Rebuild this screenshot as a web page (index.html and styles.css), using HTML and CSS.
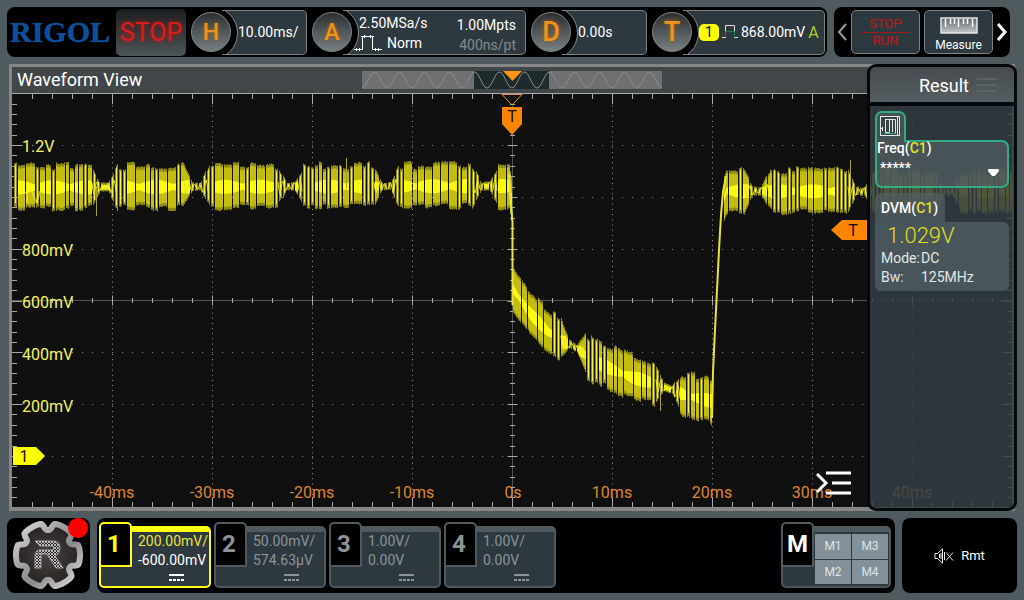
FILE: index.html
```html
<!DOCTYPE html>
<html lang="en">
<head>
<meta charset="utf-8">
<title>Oscilloscope</title>
<link rel="stylesheet" href="styles.css">
</head>
<body>
<header class="topbar">
  <div class="bar status">
    <span class="brand">RIGOL</span>
    <button class="run-state">STOP</button>
    <section class="module">
      <button class="knob">H</button>
      <div class="readout narrow">10.00ms/</div>
    </section>
    <section class="module grow">
      <button class="knob">A</button>
      <div class="readout acquire">
        <div class="lines">
          <span>2.50MSa/s</span>
          <span class="mode"><svg width="28" height="17" viewBox="0 0 28 17"><path d="M0 15.500H8.500V2.500M7 2.500H20M18.500 2.500V15.500H28M2.500 14V17M5.500 14V17M10.500 1V4M16.500 1V4M21.500 14V17M24.500 14V17" fill="none" stroke="#fff" stroke-width="1"/></svg>Norm</span>
        </div>
        <div class="lines right"><span>1.00Mpts</span><span class="dim">400ns/pt</span></div>
      </div>
    </section>
    <section class="module">
      <button class="knob big">D</button>
      <div class="readout narrow">0.00s</div>
    </section>
    <section class="module">
      <button class="knob big">T</button>
      <div class="readout trigger">
        <span class="source">1</span>
        <svg width="16" height="14" viewBox="0 0 16 14"><path d="M0 12.500H3.500V.5H12.500V12.500H16" fill="none" stroke="#ddd"/><path d="M3.500 12V6.500H12.500V12" fill="none" stroke="#1f7a50"/></svg>
        <span>868.00mV</span><span class="sweep">A</span>
      </div>
    </section>
  </div>
  <nav class="bar shortcuts">
    <button class="arrow" aria-label="Previous"><svg width="10" height="18" viewBox="0 0 10 18"><path d="M9 1L2 9L9 17" fill="none" stroke="#9a9a9a" stroke-width="2"/></svg></button>
    <button class="shortcut stoprun"><span>STOP</span><span class="run">RUN</span></button>
    <button class="shortcut measure">
      <svg width="38" height="18" viewBox="0 0 38 18"><defs><linearGradient id="rule" x2="0" y2="1"><stop offset="0" stop-color="#5f6568"/><stop offset="1" stop-color="#c3c6c8"/></linearGradient></defs><rect x="1" y="1" width="36" height="15" fill="url(#rule)" stroke="#e4e4e4" stroke-width="1.500"/><path d="M5.500 2V10M10.500 2V7M14.500 2V7M18.500 2V10M23.500 2V7M27.500 2V7M32.500 2V10" stroke="#fff" stroke-width="1.500"/></svg>
      <span>Measure</span>
    </button>
    <button class="arrow" aria-label="Next"><svg width="10" height="18" viewBox="0 0 10 18"><path d="M1 1L8 9L1 17" fill="none" stroke="#fff" stroke-width="3"/></svg></button>
  </nav>
</header>

<main class="scope">
  <div class="view-head">
    <h1>Waveform View</h1>
    <svg class="overview" width="300" height="18" viewBox="0 0 300 18">
      <rect width="300" height="18" fill="#6f7071"/>
      <rect x="112" width="75" height="18" fill="#1e2a2c"/>
      <path id="overview-wave" fill="none" stroke="#8b8c8c"/>
      <path d="M141 0H160L150.500 10Z" fill="#ff9418"/>
    </svg>
  </div>
  <svg class="plot" viewBox="12 93 1000 414">
    <rect x="12" y="93" width="1000" height="414" fill="#101010"/>
    <g id="grid"></g>
    <g id="wave"></g>
    <g class="volt">
      <text class="hidden-volt" x="22" y="203">1V</text>
      <text x="22" y="152">1.2V</text><text x="22" y="256">800mV</text><text x="22" y="308">600mV</text><text x="22" y="360">400mV</text><text x="22" y="412">200mV</text>
    </g>
    <g class="time">
      <text x="112" y="498">-40ms</text><text x="212" y="498">-30ms</text><text x="312" y="498">-20ms</text><text x="412" y="498">-10ms</text><text x="513" y="498">0s</text><text x="612" y="498">10ms</text><text x="712" y="498">20ms</text><text x="812" y="498">30ms</text><text x="912" y="498">40ms</text>
    </g>
    <path d="M502 94.500H522L512 105Z" fill="#101010" stroke="#e8923c"/>
    <path d="M502 107H522V124L512 135L502 124Z" fill="#ff8400"/>
    <text class="flag" x="512" y="122">T</text>
    <path d="M867 220V240H842L831 230L842 220Z" fill="#ff8400"/>
    <text class="flag" x="853" y="236">T</text>
    <path d="M13 447H36L45 456L36 465H13Z" fill="#ff0"/>
    <text class="flag" x="24" y="462">1</text>
  </svg>
  <button class="menu-toggle" aria-label="Open menu"><svg width="36" height="26" viewBox="0 0 36 26"><path d="M10 3H35M16 13H35M10 23H35" stroke="#fff" stroke-width="3"/><path d="M1 4L10 13L1 22" fill="none" stroke="#fff" stroke-width="3"/></svg></button>
  <aside class="result">
    <header class="result-head"><h2>Result</h2><svg width="20" height="14" viewBox="0 0 20 14"><path d="M0 1H20M0 7H20M0 13H20" stroke="#6a7275"/></svg></header>
    <section class="freq">
      <div class="freq-tab"><svg width="20" height="20" viewBox="0 0 20 20"><rect x=".5" y=".5" width="19" height="19" fill="#3a4446" stroke="#e6e6e6"/><path d="M5.500 3V16.500H9.500M5.500 3.500H15.500V17M9.500 3V16M12.500 3V16M17.500 1V19" fill="none" stroke="#dfe4e4"/><path d="M2.500 11V15M1 12.500H3" stroke="#fff"/><path d="M4 17.500H16" stroke="#2fae81"/></svg></div>
      <div class="freq-body"><div class="name">Freq(<b>C1</b>)</div><div class="value"><span>*****</span><button class="drop" aria-label="Expand"><svg width="13" height="9" viewBox="0 0 13 9"><path d="M1 0H12L13 2L8 8H5L0 2Z" fill="#fff"/></svg></button></div></div>
    </section>
    <section class="dvm">
      <div class="dvm-tab">DVM(<b>C1</b>)</div>
      <div class="dvm-body">
        <div class="digits">1.029V</div>
        <dl><dt>Mode:</dt><dd>DC</dd><dt>Bw:</dt><dd>125MHz</dd></dl>
      </div>
    </section>
  </aside>
</main>

<footer class="bottombar">
  <button class="bar home" aria-label="Home">
    <svg width="84" height="75" viewBox="0 0 84 75">
      <defs><linearGradient id="steel" x2="1" y2="1"><stop offset="0" stop-color="#dedede"/><stop offset=".35" stop-color="#a4a4a4"/><stop offset=".6" stop-color="#8a8a8a"/><stop offset="1" stop-color="#e2e2e2"/></linearGradient><radialGradient id="core"><stop offset="0" stop-color="#4a4341"/><stop offset="1" stop-color="#272322"/></radialGradient>
      <pattern id="mesh" width="3" height="3" patternUnits="userSpaceOnUse"><rect width="3" height="3" fill="#222"/><path d="M0 0L3 3M3 0L0 3" stroke="#ddd" stroke-width=".8"/></pattern></defs>
      <path id="gear" fill="url(#core)" stroke="url(#steel)" stroke-width="6" stroke-linejoin="round"/>
      <path d="M28 23H46Q53 23 53 29.500Q53 36 48 38L56 50H49L40 36H34V50H28V38Q28 32 34 32H44Q47 32 47 30Q47 28 44 28H33Z" fill="url(#mesh)" stroke="#c8c8c8" stroke-width=".7"/>
      <circle cx="71" cy="10" r="10" fill="#f00"/>
    </svg>
  </button>
  <div class="bar channels">
    <button class="channel on"><span class="num">1</span><span class="vals"><span>200.00mV/</span><span class="offset">-600.00mV</span><span class="dc"></span></span></button>
    <button class="channel"><span class="num">2</span><span class="vals"><span>50.00mV/</span><span class="offset">574.63µV</span><span class="dc"></span></span></button>
    <button class="channel"><span class="num">3</span><span class="vals"><span>1.00V/</span><span class="offset">0.00V</span><span class="dc"></span></span></button>
    <button class="channel"><span class="num">4</span><span class="vals"><span>1.00V/</span><span class="offset">0.00V</span><span class="dc"></span></span></button>
    <button class="channel math"><span class="num">M</span><span class="cells"><span>M1</span><span>M3</span><span>M2</span><span>M4</span></span></button>
  </div>
  <div class="bar remote">
    <svg width="20" height="16" viewBox="0 0 20 16"><path d="M1 5.500H3.500L8.500 .8V15.200L3.500 10.500H1ZM5.500 6V10M7 5V11M10.500 4V12M12 12.500L19 4.500M12 4.500L19 12.500" fill="none" stroke="#e8e8e8"/></svg>
    <span>Rmt</span>
  </div>
</footer>
<script src="script.js"></script>
</body>
</html>
```
FILE: styles.css
```css
* { box-sizing: border-box; }
body {
  margin: 0;
  padding: 7px;
  display: flex;
  flex-direction: column;
  gap: 7px;
  background: #505b5f;
  color: #fff;
  font-family: Roboto, "Liberation Sans", sans-serif;
  font-size: 14px;
}
button { margin: 0; padding: 0; border: 0; background: none; color: inherit; font: inherit; }
svg { display: block; flex: none; }
h1, h2 { margin: 0; font-size: 18px; font-weight: 400; line-height: 26px; }
b { color: #e4e02c; font-weight: 500; }
.bar { background: #000; border-radius: 8px; }

.topbar { display: flex; gap: 7px; padding-right: 7px; }
.status { flex: 1; height: 50px; display: flex; align-items: center; gap: 5px; padding: 0 2px; }
.brand {
  width: 102px;
  text-align: center;
  color: #0d4f9b;
  font: bold 30px "Liberation Serif", serif;
  text-shadow: 0 0 1px #0d4f9b;
}
.run-state {
  width: 70px;
  height: 47px;
  border-radius: 5px;
  background: linear-gradient(#1a1e20, #4b5557);
  color: #d91c1c;
  font-size: 25px;
  text-shadow: 0 0 5px #c01010;
}
.module { display: flex; align-items: center; }
.grow { flex: 1; }
.knob {
  position: relative;
  z-index: 1;
  flex: none;
  width: 40px;
  height: 40px;
  border: 1px solid #7d8487;
  border-radius: 50%;
  background: linear-gradient(#2c3032, #777f83);
  color: #f0921e;
  font-size: 23px;
  font-weight: 500;
  text-shadow: 0 0 4px #a86414;
}
.big { font-size: 27px; }
.readout {
  position: relative;
  isolation: isolate;
  flex: 1;
  height: 45px;
  margin-left: -9px;
  padding-left: 16px;
  display: flex;
  align-items: center;
  overflow: hidden;
  border: 1px solid #7c8184;
  border-left: 0;
  border-radius: 0 5px 5px 0;
  background: #2e383f;
}
.readout::before {
  content: "";
  position: absolute;
  z-index: -1;
  left: -38px;
  top: -5px;
  width: 52px;
  height: 52px;
  border: 1px solid #858a8d;
  border-radius: 50%;
  background: #000;
}
.narrow { flex: none; width: 85px; }
.acquire { padding-right: 9px; justify-content: space-between; align-items: flex-start; }
.lines { display: flex; flex-direction: column; line-height: 20px; padding-top: 2px; }
.right { padding-top: 4px; text-align: right; }
.mode { display: flex; align-items: center; gap: 5px; margin-left: -5px; }
.dim { color: #858b8f; }
.trigger { flex: none; width: 142px; gap: 3px; }
.source {
  width: 20px;
  border-radius: 5px;
  background: #ff0;
  color: #000;
  line-height: 17px;
  text-align: center;
}
.sweep { color: #a4cf2a; font-size: 16px; }

.shortcuts { display: flex; align-items: center; gap: 4px; width: 176px; padding: 0 3px; }
.shortcut {
  display: flex;
  flex-direction: column;
  align-items: center;
  justify-content: center;
  width: 70px;
  height: 44px;
  border: 1px solid #7c8184;
  border-radius: 5px;
  background: #2e383f;
}
.stoprun { color: #c01818; font-size: 13px; line-height: 16px; }
.run { width: 48px; border-top: 1px solid #a01818; text-align: center; }
.measure { gap: 3px; padding-top: 4px; font-size: 12px; line-height: 14px; }

.scope {
  position: relative;
  margin: 0 2px;
  border: 3px solid #858786;
  border-bottom-width: 4px;
  background: #414649;
}
.view-head { display: flex; align-items: center; justify-content: center; }
.view-head h1 { flex: 1; text-indent: 5px; }
.view-head::after { content: ""; flex: 1; }
.plot { width: 100%; height: auto; }
.volt { fill: #f4f45c; font-size: 16px; }
.hidden-volt { fill: #fff21a; opacity: .7; }
.time { fill: #de8534; font-size: 16px; text-anchor: middle; }
.flag { fill: #111; font-size: 16px; text-anchor: middle; }
.menu-toggle { position: absolute; right: 160px; bottom: 11px; }

.result {
  position: absolute;
  top: -3px;
  right: -5px;
  bottom: -4px;
  width: 150px;
  border: 3px solid #050708;
  border-radius: 9px;
  background: rgba(50, 60, 68, .86);
}
.result-head {
  display: flex;
  align-items: center;
  justify-content: flex-end;
  gap: 8px;
  height: 39px;
  padding-right: 17px;
  border-bottom: 4px solid #050708;
  border-radius: 6px 6px 0 0;
  background: linear-gradient(#464c4e, #545d61);
}
.result-head h2 { padding-top: 3px; }
.freq, .dvm { margin: 5px 5px 0; font-weight: 500; }
.freq-tab {
  position: relative;
  z-index: 1;
  width: 31px;
  height: 31px;
  padding: 3px;
  border: 2px solid #30ac80;
  border-bottom: 0;
  border-radius: 7px 7px 0 0;
  background: #455154;
}
.freq-body {
  height: 48px;
  margin-top: -2px;
  border: 2px solid #30ac80;
  border-radius: 0 7px 7px 7px;
  background: rgba(90, 104, 106, .6);
}
.name { line-height: 13px; }
.value { display: flex; justify-content: space-between; padding: 3px 7px 0 3px; line-height: 20px; }
.drop { padding-top: 10px; }
.drop svg { height: 8px; }
.dvm-tab { width: 70px; padding: 1px 6px 0; border-radius: 6px 6px 0 0; background: rgba(82, 95, 99, .7); line-height: 28px; }
.dvm-body { padding: 0 6px 4px; border-radius: 0 6px 6px 6px; background: #48555a; font-weight: 400; }
.digits { padding-left: 6px; color: #e2de22; font-size: 22px; font-weight: 300; line-height: 27px; }
dl { display: grid; grid-template-columns: 40px 1fr; margin: 0; line-height: 19px; color: #e4e6e6; }
dd { margin: 0; }

.bottombar { display: flex; gap: 7px; }
.home { width: 83px; height: 75px; }
.channels { flex: 1; display: flex; align-items: flex-start; gap: 3px; padding: 4px 4px 5px 2px; }
.channel {
  --edge: #50595d;
  position: relative;
  width: 112px;
  height: 62px;
  margin-top: 4px;
  border: 2px solid var(--edge);
  border-top-width: 6px;
  border-radius: 5px;
  background: #2e383f;
  color: #8b9399;
  text-align: left;
}
.on { --edge: #ffff16; color: #e6e63c; }
.num {
  position: absolute;
  left: -2px;
  top: -10px;
  width: 33px;
  height: 45px;
  border: 2px solid var(--edge);
  border-radius: 5px 5px 0 0;
  background: #000;
  font-size: 24px;
  font-weight: 700;
  line-height: 41px;
  text-indent: 6px;
}
.on .num { color: #ffff16; }
.vals { display: flex; flex-direction: column; height: 54px; padding-left: 37px; line-height: 19px; white-space: nowrap; }
.on .offset { color: #fff; }
.dc {
  width: 15px;
  height: 7px;
  margin: 4px 0 0 31px;
  border-top: 2px solid;
  background: repeating-linear-gradient(90deg, currentColor 0 3px, transparent 3px 4px) bottom / 100% 2px no-repeat;
}
.on .dc { color: #fff; }
.math { width: 110px; margin-left: auto; }
.math .num { color: #fff; text-indent: 4px; }
.cells {
  display: grid;
  grid-template: 1fr 1fr / 1fr 1fr;
  gap: 1px;
  height: 50px;
  margin: 2px 1px 2px 32px;
  color: #dfe3e6;
  font-size: 12px;
  text-align: center;
}
.cells span { display: grid; place-items: center; background: #84909a; }
.remote { display: flex; align-items: center; justify-content: center; gap: 7px; width: 115px; font-size: 13px; }
```
FILE: script.js
```js
const LEFT = 12, RIGHT = 1012, MID_X = 512;
const MID_Y = 300.5, DIV_Y = 51.8, TOP = 93.5, BOTTOM = 507;

function addPath(parent, d, stroke, width, dash) {
  const p = document.createElementNS("http://www.w3.org/2000/svg", "path");
  p.setAttribute("d", d);
  p.setAttribute("fill", "none");
  p.setAttribute("stroke", stroke);
  p.setAttribute("stroke-width", width || 1);
  if (dash) p.setAttribute("stroke-dasharray", dash);
  document.getElementById(parent).appendChild(p);
}

// Graticule
for (let i = 1; i < 10; i++) {
  if (i !== 5) addPath("grid", `M${LEFT + i * 100 + .5} 95V${BOTTOM}`, "#9a9a9a", 1, "1 4.18");
}
for (let i = -3; i <= 3; i++) {
  const y = Math.round(MID_Y + i * DIV_Y) + .5;
  if (i) addPath("grid", `M${LEFT} ${y}H${RIGHT}`, "#858585", 1, "1 9");
}
addPath("grid", `M${LEFT} ${MID_Y}H${RIGHT}M${MID_X + .5} 94V${BOTTOM}`, "#555", 1);
let ticks = "";
for (let i = 1; i < 50; i++) {
  const x = LEFT + i * 20 + .5, n = i % 5 ? 5 : 10;
  ticks += `M${x} 94v${n}M${x} ${BOTTOM}v-${n}M${x} ${MID_Y - n / 2}v${n}`;
}
for (let i = -19; i < 20; i++) {
  const y = Math.round(MID_Y + i * DIV_Y / 5) + .5, n = i % 5 ? 5 : 10;
  ticks += `M${LEFT} ${y}h${n}M${RIGHT} ${y}h-${n}M${MID_X + .5 - n / 2} ${y}h${n}`;
}
addPath("grid", ticks, "#a8a8a8", 1);
addPath("grid", `M${LEFT} ${TOP}H${RIGHT}`, "#aaa", 1);

// Signal: mean level and beat envelope, interpolated between key points
const level = [[12, 187.5], [509, 186], [512, 205], [513, 290], [530, 314], [547, 331], [563, 342], [573, 346], [593, 361], [613, 370], [630, 377], [653, 383], [669, 389], [687, 396], [711, 401], [712, 395], [714, 345], [717, 290], [720, 240], [723, 200], [726, 191], [1012, 192]];
const nodes = [-20, 104, 196, 290, 386, 485, 573, 668, 757, 860, 948, 1040];

function meanAt(x) {
  let i = 1;
  while (i < level.length - 1 && level[i][0] < x) i++;
  const [x0, y0] = level[i - 1], [x1, y1] = level[i];
  return y0 + (y1 - y0) * (x - x0) / (x1 - x0);
}
let seed = 7;
function rnd() {
  seed = (seed * 16807) % 2147483647;
  return seed / 2147483647;
}
let outer = "", body = "", core = "", spikes = "";
let left = 0, up = 20, down = 20, loose = false;
for (let x = 13; x < RIGHT; x++) {
  if (x > 711 && x < 724) continue;
  const c = meanAt(x);
  const d = Math.min(...nodes.map(n => Math.abs(n - x)));
  const env = 4 + 17 * Math.min(1, Math.max(0, (d - 4) / 9));
  const px = x + .5;
  if (--left < 0) {
    loose = d < 22 ? rnd() < .8 : rnd() < .3;
    left = loose ? 3 : 3 + Math.floor(rnd() * 7);
    up = .84 + rnd() * .38;
    down = .84 + rnd() * .32;
    continue;
  }
  const top = c - env * up * (.94 + rnd() * .08), bottom = c + env * down * (.94 + rnd() * .08);
  outer += `M${px} ${top.toFixed(1)}V${bottom.toFixed(1)}`;
  if (loose) {
    if (left === 1) spikes += `M${px} ${(top + 2).toFixed(1)}V${(bottom - 3).toFixed(1)}`;
  } else {
    body += `M${px} ${(top + 3).toFixed(1)}V${(bottom - 3).toFixed(1)}`;
    const h = Math.min(env * .6, 3 + 4 * Math.abs(Math.sin(x / 11)));
    core += `M${px} ${(c - h).toFixed(1)}V${(c + h).toFixed(1)}`;
  }
}
addPath("wave", outer, "#8e8b14", 1);
addPath("wave", body, "#c2bd0e", 1);
addPath("wave", spikes, "#f2ee4a", 1);
addPath("wave", core, "#fbf910", 1);
addPath("wave", "M509 174L511 205L512.500 222V305", "#e8e440", 2);
addPath("wave", "M712 418L713 372L715 330L717 290L719 250L721 215L723 192L726 176", "#e8e430", 2);
addPath("wave", "M96.500 186V216M346.500 158V188M850.500 160V190M660.500 385V411", "#a8a430", 1);
for (const n of nodes) {
  if (n < LEFT || n > RIGHT) continue;
  let d = "";
  for (let t = -12; t <= 12; t++) d += `${t > -12 ? "L" : "M"}${n + t} ${(meanAt(n + t) + (2 + Math.abs(t) / 2) * Math.sin(t * 1.1)).toFixed(1)}`;
  addPath("wave", d, "#e6e22c", 1);
}

// Overview strip
let strip = "M0 17";
for (let x = 1; x <= 300; x++) strip += `L${x} ${(9 + 8 * Math.cos(x * Math.PI / 12.5)).toFixed(1)}`;
document.getElementById("overview-wave").setAttribute("d", strip);

// Six-lobed badge outline, notched every 60 degrees
let gear = "";
for (let a = 0; a < 360; a += 3) {
  const off = ((a + 60) % 60) - 30;
  const r = 32 - 7 * Math.exp(-Math.pow(off / 9, 4));
  const t = a * Math.PI / 180;
  gear += `${a ? "L" : "M"}${(41 + r * Math.cos(t)).toFixed(1)} ${(37 + r * Math.sin(t)).toFixed(1)}`;
}
document.getElementById("gear").setAttribute("d", gear + "Z");
```
